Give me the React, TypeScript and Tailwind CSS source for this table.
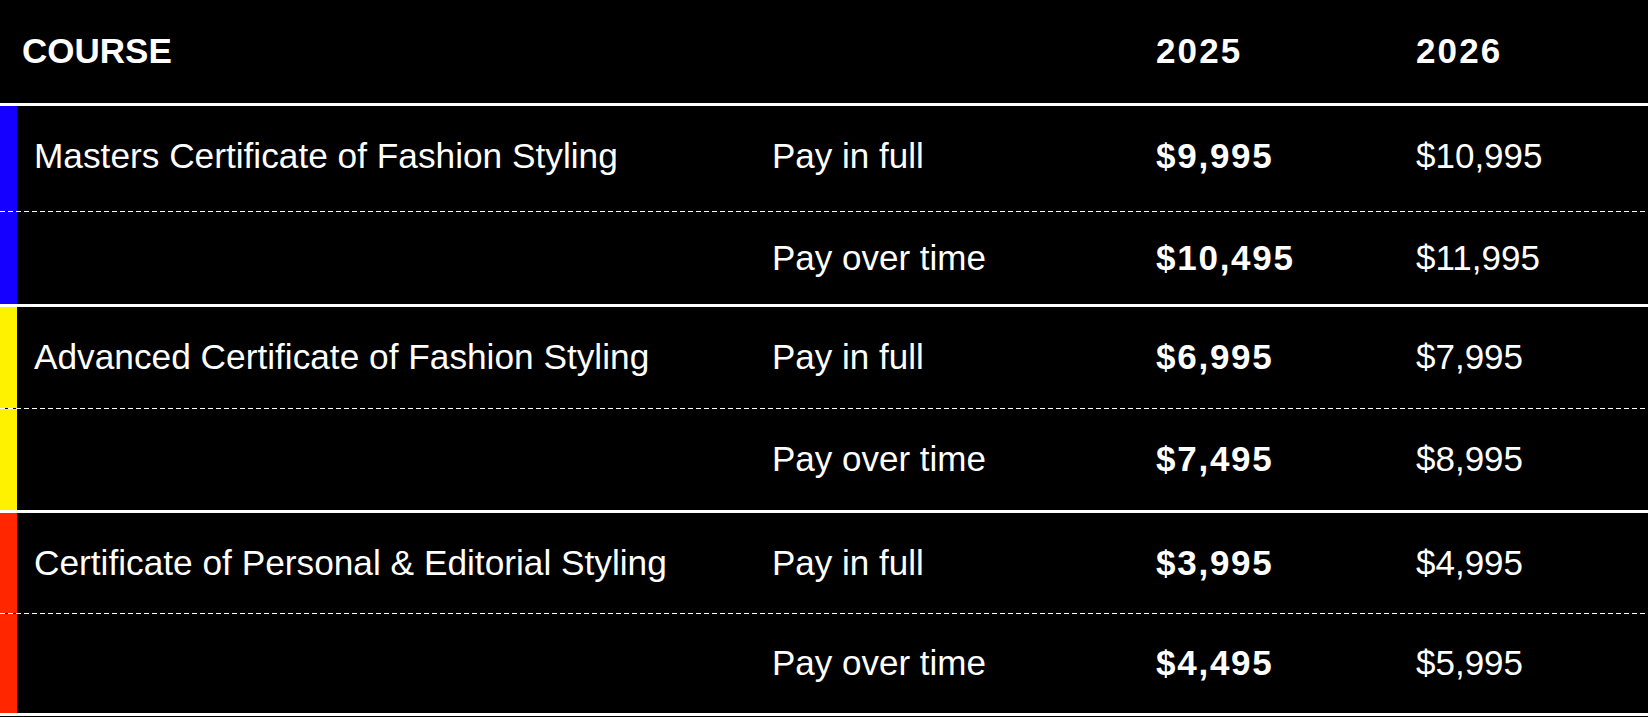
const courses = [
  {
    name: 'Masters Certificate of Fashion Styling',
    bar: 'border-l-[#1500ff]',
    heights: ['h-[105px] pb-[4px]', 'h-[92px]'],
    prices: [
      { plan: 'Pay in full', now: '$9,995', next: '$10,995' },
      { plan: 'Pay over time', now: '$10,495', next: '$11,995' },
    ],
  },
  {
    name: 'Advanced Certificate of Fashion Styling',
    bar: 'border-l-[#fff200]',
    heights: ['h-[101px]', 'h-[101px]'],
    prices: [
      { plan: 'Pay in full', now: '$6,995', next: '$7,995' },
      { plan: 'Pay over time', now: '$7,495', next: '$8,995' },
    ],
  },
  {
    name: 'Certificate of Personal & Editorial Styling',
    bar: 'border-l-[#ff2600]',
    heights: ['h-[100px]', 'h-[99px]'],
    prices: [
      { plan: 'Pay in full', now: '$3,995', next: '$4,995' },
      { plan: 'Pay over time', now: '$4,495', next: '$5,995' },
    ],
  },
];

const Dashed = () => (
  <div className="h-px w-full bg-[repeating-linear-gradient(90deg,#ffffff_0_5px,transparent_5px_8px)]" />
);

export default function App() {
  return (
    <div className="h-[717px] w-[1648px] overflow-hidden bg-black font-['Liberation_Sans',Arial,sans-serif] text-[35px] text-white">
      {/* header */}
      <div className="grid h-[106px] grid-cols-[772px_384px_260px_1fr] items-center border-b-[3px] border-white pb-[1px] font-bold">
        <div className="pl-[22px]">COURSE</div>
        <div />
        <div className="tracking-[0.06em]">2025</div>
        <div className="tracking-[0.06em]">2026</div>
      </div>

      {courses.map((course) => (
        <div key={course.name} className="border-b-[3px] border-white">
          {course.prices.map((p, i) => (
            <div key={p.plan}>
              {i > 0 && <Dashed />}
              <div
                className={`grid grid-cols-[755px_384px_260px_1fr] items-center border-l-[17px] ${course.bar} ${course.heights[i]}`}
              >
                <div className="pl-[17px] text-[35.25px]">{i === 0 ? course.name : ''}</div>
                <div>{p.plan}</div>
                <div className="font-bold tracking-[0.05em]">{p.now}</div>
                <div>{p.next}</div>
              </div>
            </div>
          ))}
        </div>
      ))}
    </div>
  );
}
